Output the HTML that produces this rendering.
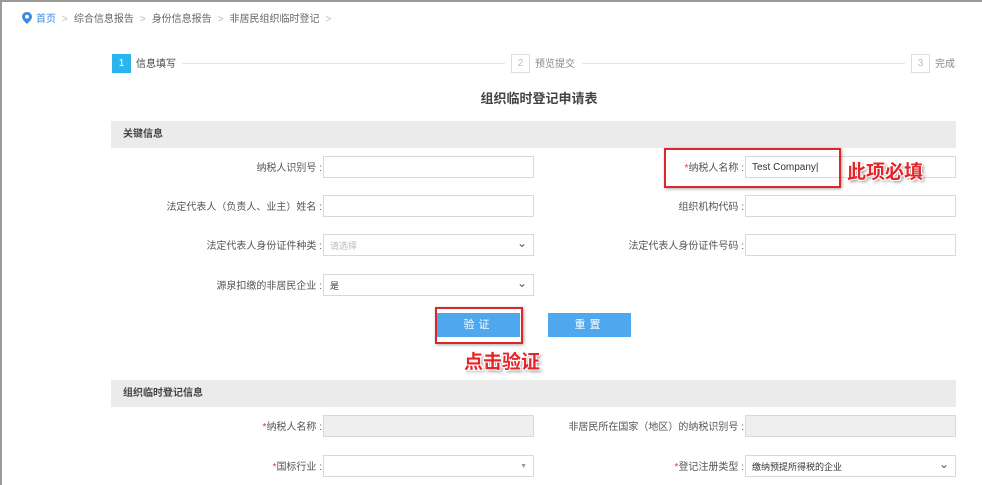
<!DOCTYPE html>
<html><head><meta charset="utf-8"><style>
*{margin:0;padding:0;box-sizing:border-box}
body{width:982px;height:485px;background:#fff;font-family:"Liberation Sans","Noto Sans CJK SC",sans-serif;font-size:10px;color:#555;position:relative;overflow:hidden}
.a{position:absolute}
.crumb{top:10px;left:22px;font-size:10px;color:#666;white-space:nowrap}
.crumb span.g{color:#bbb;margin:0 6px}
.step{width:19px;height:19px;border:1px solid #ddd;color:#bbb;text-align:center;line-height:17px;font-size:10px}
.line{height:1px;background:#e5e5e5}
.bar{left:111px;width:845px;height:27px;background:#ebebeb;color:#444;font-size:10px;font-weight:bold;padding-left:12px;line-height:27px}
.lbl{text-align:right;font-size:10px;color:#555;white-space:nowrap;line-height:12px}
.in{height:22px;border:1px solid #d9d9d9;background:#fff;font-size:10px;line-height:22px;padding-left:6px;color:#333}
.sel:after{content:"⌄";position:absolute;right:6px;top:-3px;font-size:12px;color:#555}
.btn{height:24px;width:83px;background:#4fa7ee;color:#fff;text-align:center;line-height:24px;font-size:11px;letter-spacing:4px}
.red{border:2px solid #d9272b;box-shadow:1px 1px 3px rgba(0,0,0,.35)}
.rt{color:#e3262a;font-weight:bold;font-size:19px;text-shadow:1px 1px 0 #fff,-1px -1px 0 #fff,1px -1px 0 #fff,-1px 1px 0 #fff,2px 2px 3px rgba(0,0,0,.5)}
.s{color:#e33}
</style></head><body>
<div class="a" style="left:0;top:0;width:982px;height:2px;background:#9a9a9a"></div>
<div class="a" style="left:0;top:0;width:2px;height:485px;background:#9a9a9a"></div>
<div class="a crumb"><svg width="10" height="12" viewBox="0 0 10 12" style="vertical-align:-2px;margin-right:4px"><path d="M5 0C2.2 0 0 2.1 0 4.8 0 8 5 12 5 12s5-4 5-7.2C10 2.1 7.8 0 5 0zm0 6.6a1.9 1.9 0 1 1 0-3.8 1.9 1.9 0 0 1 0 3.8z" fill="#3d8be0"/></svg><span style="color:#3d8be0">首页</span><span class="g">&gt;</span>综合信息报告<span class="g">&gt;</span>身份信息报告<span class="g">&gt;</span>非居民组织临时登记<span class="g">&gt;</span></div>

<div class="a step" style="left:112px;top:54px;background:#2cb4ee;border-color:#2cb4ee;color:#fff">1</div>
<div class="a" style="left:136px;top:59px;color:#444;line-height:12px">信息填写</div>
<div class="a line" style="left:182px;top:63px;width:323px"></div>
<div class="a step" style="left:511px;top:54px">2</div>
<div class="a" style="left:535px;top:59px;color:#888;line-height:12px">预览提交</div>
<div class="a line" style="left:582px;top:63px;width:323px"></div>
<div class="a step" style="left:911px;top:54px">3</div>
<div class="a" style="left:935px;top:59px;color:#888;line-height:12px">完成</div>

<div class="a" style="left:0;width:982px;top:91px;text-align:center;font-size:13px;font-weight:bold;color:#444;padding-left:96px;line-height:16px">组织临时登记申请表</div>

<div class="a bar" style="top:121px">关键信息</div>

<div class="a lbl" style="right:660px;top:163px">纳税人识别号 :</div>
<div class="a in" style="left:323px;top:156px;width:211px"></div>
<div class="a lbl" style="right:238px;top:163px"><span class="s">*</span>纳税人名称 :</div>
<div class="a in" style="left:745px;top:156px;width:211px">Test Company|</div>

<div class="a lbl" style="right:660px;top:202px">法定代表人（负责人、业主）姓名 :</div>
<div class="a in" style="left:323px;top:195px;width:211px"></div>
<div class="a lbl" style="right:238px;top:202px">组织机构代码 :</div>
<div class="a in" style="left:745px;top:195px;width:211px"></div>

<div class="a lbl" style="right:660px;top:241px">法定代表人身份证件种类 :</div>
<div class="a in sel" style="left:323px;top:234px;width:211px;color:#bbb;font-size:9px">请选择</div>
<div class="a lbl" style="right:238px;top:241px">法定代表人身份证件号码 :</div>
<div class="a in" style="left:745px;top:234px;width:211px"></div>

<div class="a lbl" style="right:660px;top:281px">源泉扣缴的非居民企业 :</div>
<div class="a in sel" style="left:323px;top:274px;width:211px;font-size:9px">是</div>

<div class="a btn" style="left:437px;top:313px">验证</div>
<div class="a btn" style="left:548px;top:313px">重置</div>

<div class="a red" style="left:664px;top:148px;width:177px;height:40px"></div>
<div class="a red" style="left:435px;top:307px;width:88px;height:37px"></div>
<div class="a rt" style="left:847px;top:157px">此项必填</div>
<div class="a rt" style="left:464px;top:347px">点击验证</div>

<div class="a bar" style="top:380px">组织临时登记信息</div>

<div class="a lbl" style="right:660px;top:422px"><span class="s">*</span>纳税人名称 :</div>
<div class="a in" style="left:323px;top:415px;width:211px;background:#efefef"></div>
<div class="a lbl" style="right:238px;top:422px">非居民所在国家（地区）的纳税识别号 :</div>
<div class="a in" style="left:745px;top:415px;width:211px;background:#efefef"></div>

<div class="a lbl" style="right:660px;top:462px"><span class="s">*</span>国标行业 :</div>
<div class="a in" style="left:323px;top:455px;width:211px"><span style="position:absolute;right:6px;top:0;font-size:7px;color:#999">▼</span></div>
<div class="a lbl" style="right:238px;top:462px"><span class="s">*</span>登记注册类型 :</div>
<div class="a in sel" style="left:745px;top:455px;width:211px;font-size:9px">缴纳预提所得税的企业</div>
</body></html>
